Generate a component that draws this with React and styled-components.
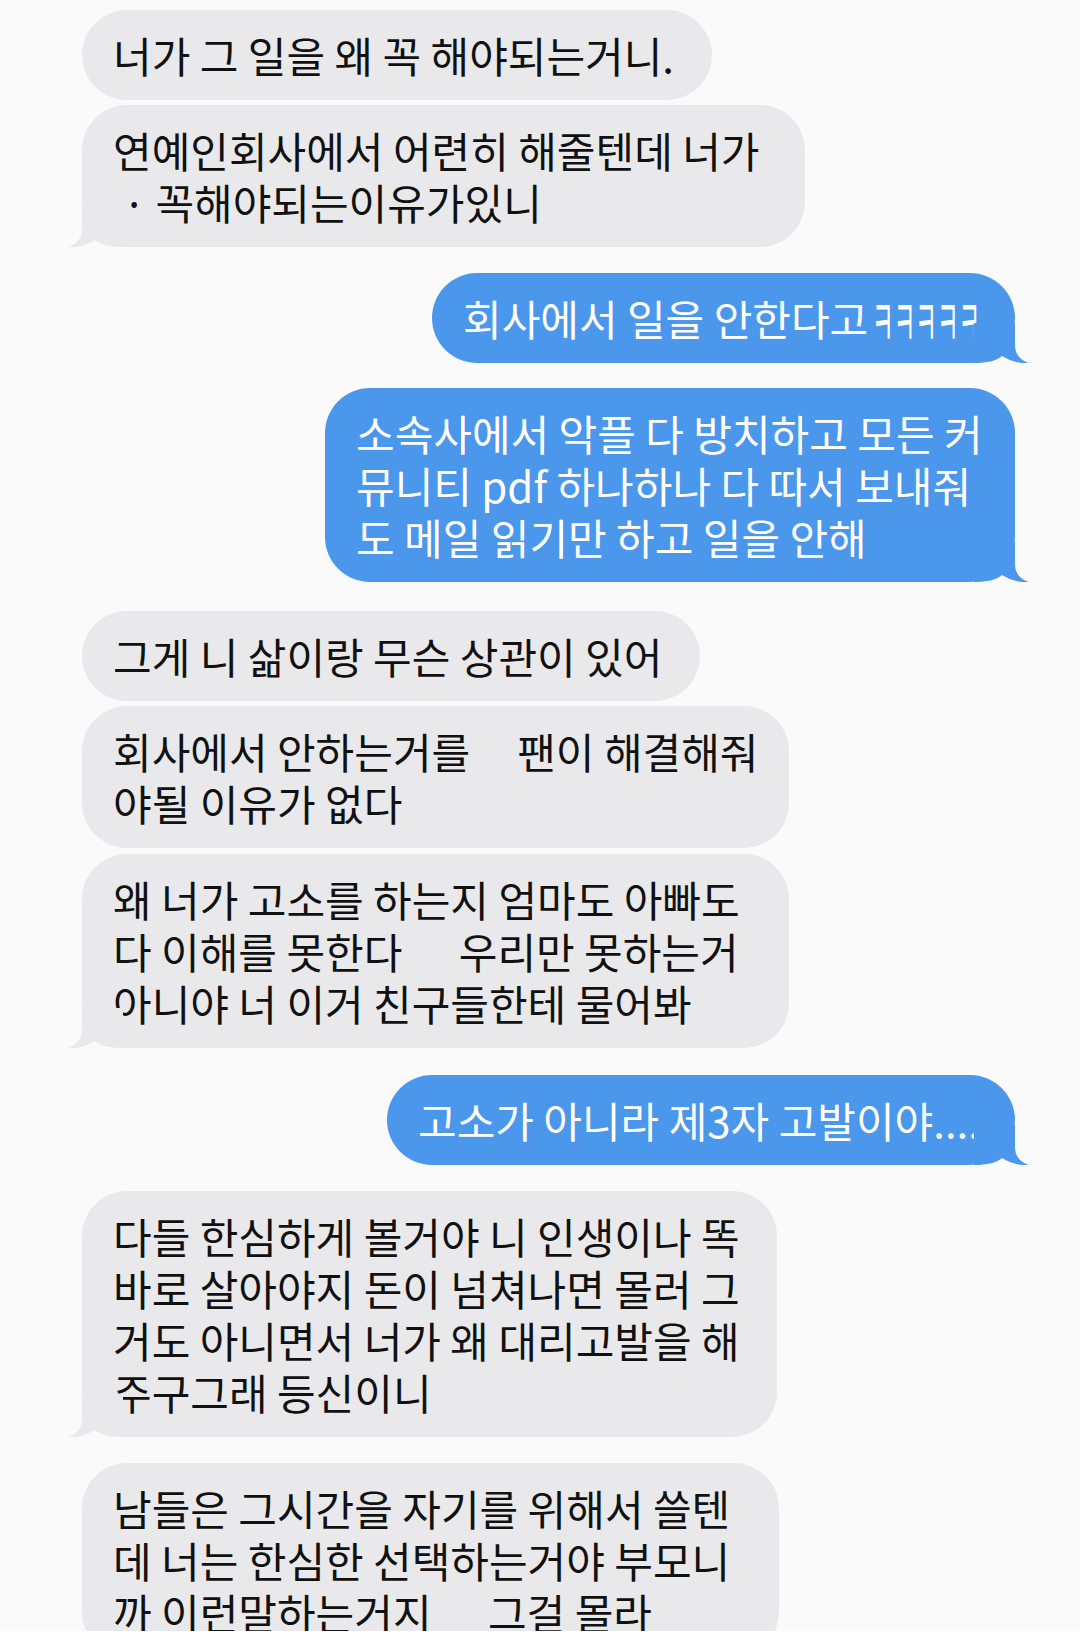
import React from "react";
import styled, { createGlobalStyle } from "styled-components";

const Global = createGlobalStyle`
  html, body { margin: 0; padding: 0; background: #ffffff; }
  body { font-family: "Noto Sans CJK KR", "Noto Sans", sans-serif; }
`;

const Screen = styled.div`
  height: 1631px;
  overflow: hidden;
  background: #fafafa;
  display: flex;
  flex-direction: column;
  padding: 0 65px 0 82px;
  box-sizing: border-box;
`;

const Row = styled.div`
  display: flex;
  justify-content: ${(p) => (p.$side === "right" ? "flex-end" : "flex-start")};
  margin-top: ${(p) => p.$gap}px;
  flex-shrink: 0;
`;

const Bubble = styled.div`
  position: relative;
  width: ${(p) => p.$w}px;
  box-sizing: border-box;
  padding: 19px 28px 19px 31px;
  border-radius: 45px;
  background: ${(p) => (p.$side === "right" ? "#4b97ec" : "#e9e9eb")};
  color: ${(p) => (p.$side === "right" ? "#ffffff" : "#111111")};
  font-family: "Noto Sans CJK KR", "Noto Sans", sans-serif;
  font-size: 42px;
  line-height: 52px;
  font-weight: 400;
`;

const Line = styled.div`
  white-space: pre;
`;

const Laugh = styled.span`
  display: inline-block;
  width: 120px;
  margin-left: 4px;
  white-space: nowrap;
  vertical-align: top;
`;

const LaughInner = styled.span`
  display: inline-block;
  transform: scale(0.56, 1.6);
  transform-origin: left center;
`;

const TailSvg = styled.svg`
  position: absolute;
  bottom: 0;
  width: 56px;
  height: 40px;
  ${(p) =>
    p.$side === "right"
      ? "right: -15px; transform: scaleX(-1);"
      : "left: -15px;"}
`;

const Tail = ({ side }) => (
  <TailSvg $side={side} viewBox="0 0 56 40" aria-hidden="true">
    <path
      d="M15 0 L15 22 C15 31 10 37 1 40 C10 41 20 38 28 33 C34 38 43 40 56 40 L56 0 Z"
      fill={side === "right" ? "#4b97ec" : "#e9e9eb"}
    />
  </TailSvg>
);

const messages = [
  { side: "left", w: 630, gap: 10, lines: ["너가 그 일을 왜 꼭 해야되는거니."] },
  {
    side: "left",
    w: 723,
    gap: 5,
    tail: true,
    lines: ["연예인회사에서 어련히 해줄텐데 너가", " · 꼭해야되는이유가있니"],
  },
  {
    side: "right",
    w: 583,
    gap: 26,
    tail: true,
    lines: [
      <>
        회사에서 일을 안한다고
        <Laugh>
          <LaughInner>ㅋㅋㅋㅋㅋ</LaughInner>
        </Laugh>
      </>,
    ],
  },
  {
    side: "right",
    w: 690,
    gap: 25,
    tail: true,
    lines: [
      "소속사에서 악플 다 방치하고 모든 커",
      "뮤니티 pdf 하나하나 다 따서 보내줘",
      "도 메일 읽기만 하고 일을 안해",
    ],
  },
  { side: "left", w: 618, gap: 29, lines: ["그게 니 삶이랑 무슨 상관이 있어"] },
  {
    side: "left",
    w: 707,
    gap: 5,
    lines: ["회사에서 안하는거를     팬이 해결해줘", "야될 이유가 없다"],
  },
  {
    side: "left",
    w: 707,
    gap: 6,
    tail: true,
    lines: [
      "왜 너가 고소를 하는지 엄마도 아빠도",
      "다 이해를 못한다      우리만 못하는거",
      "아니야 너 이거 친구들한테 물어봐",
    ],
  },
  {
    side: "right",
    w: 628,
    gap: 27,
    tail: true,
    lines: ["고소가 아니라 제3자 고발이야...."],
  },
  {
    side: "left",
    w: 695,
    gap: 26,
    tail: true,
    lines: [
      "다들 한심하게 볼거야 니 인생이나 똑",
      "바로 살아야지 돈이 넘쳐나면 몰러 그",
      "거도 아니면서 너가 왜 대리고발을 해",
      "주구그래 등신이니",
    ],
  },
  {
    side: "left",
    w: 697,
    gap: 26,
    lines: [
      "남들은 그시간을 자기를 위해서 쓸텐",
      "데 너는 한심한 선택하는거야 부모니",
      "까 이런말하는거지      그걸 몰라",
    ],
  },
];

export default function App() {
  return (
    <>
      <Global />
      <Screen>
        {messages.map((m, i) => (
          <Row key={i} $side={m.side} $gap={m.gap}>
            <Bubble $side={m.side} $w={m.w}>
              {m.lines.map((l, j) => (
                <Line key={j}>{l}</Line>
              ))}
              {m.tail && <Tail side={m.side} />}
            </Bubble>
          </Row>
        ))}
      </Screen>
    </>
  );
}
